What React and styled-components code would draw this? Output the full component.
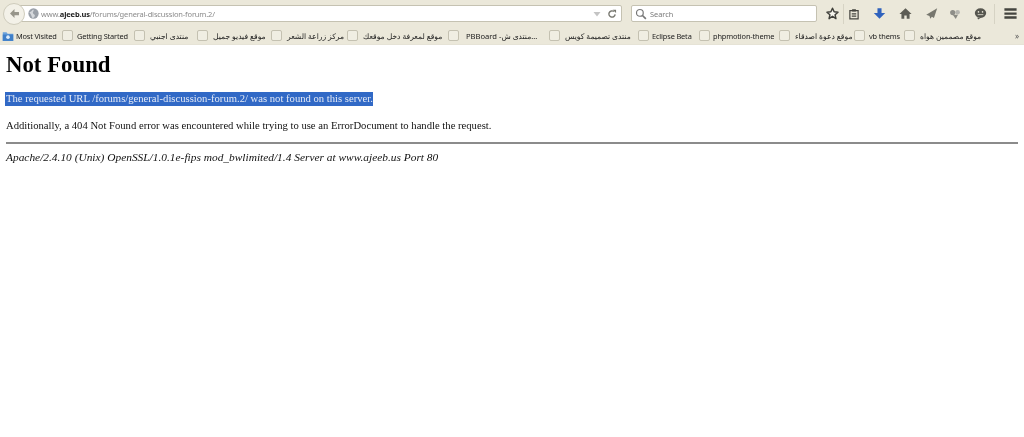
import React from "react";
import styled, { createGlobalStyle } from "styled-components";

const Global = createGlobalStyle`
  html, body { margin: 0; padding: 0; background: #fff; }
  #root { min-height: 100vh; }
`;

const Page = styled.div`
  width: 1024px;
  height: 437px;
  overflow: hidden;
  background: #fff;
  filter: blur(0.4px);
`;

const Chrome = styled.header`
  background: #ebe8da;
  border-bottom: 1px solid #e6e3d6;
  font-family: "Noto Sans", "DejaVu Sans", "Liberation Sans", sans-serif;
`;

const NavBar = styled.div`
  display: flex;
  align-items: center;
  height: 27px;
  padding: 0 0 0 3px;
  box-sizing: border-box;
`;

const BackButton = styled.div`
  flex: none;
  width: 22px;
  height: 22px;
  border-radius: 50%;
  background: #f3f1e8;
  border: 1px solid #cfccbc;
  box-sizing: border-box;
  display: flex;
  align-items: center;
  justify-content: center;
  margin-right: -8px;
  position: relative;
  z-index: 1;
`;

const Field = styled.div`
  height: 17px;
  background: #fff;
  border: 1px solid #c5c2b2;
  border-radius: 2px;
  box-sizing: border-box;
  display: flex;
  align-items: center;
  flex: none;
  width: ${(p) => p.$w}px;
  margin-left: ${(p) => p.$ml || 0}px;
  padding-left: ${(p) => p.$pl || 0}px;
`;

const UrlText = styled.span`
  font-size: 7.5px;
  letter-spacing: -0.15px;
  color: #8a8a8a;
  margin-left: 2px;
  white-space: nowrap;
  b { color: #222; font-weight: 700; }
`;

const FieldEnd = styled.div`
  margin-left: auto;
  display: flex;
  align-items: center;
  gap: 6px;
  padding-right: 4px;
`;

const SearchText = styled.span`
  font-size: 7.4px;
  color: #7a7a7a;
  margin-left: 3px;
`;

const ToolIcon = styled.div`
  flex: none;
  width: ${(p) => p.$w || 16}px;
  height: 16px;
  display: flex;
  align-items: center;
  justify-content: center;
  margin-left: ${(p) => p.$ml || 0}px;
`;

const Divider = styled.div`
  flex: none;
  width: 1px;
  height: 20px;
  background: #d6d3c4;
  margin-left: ${(p) => p.$ml || 0}px;
`;

const BookmarkBar = styled.div`
  display: flex;
  align-items: center;
  height: 17px;
  padding-left: 2px;
`;

const Bookmark = styled.div`
  flex: none;
  display: flex;
  align-items: center;
  width: ${(p) => p.$w}px;
  font-size: ${(p) => (p.$arabic ? 7.6 : 7.4)}px;
  letter-spacing: ${(p) => (p.$arabic ? 0 : -0.15)}px;
  color: #1c1c1c;
  white-space: nowrap;
`;

const FolderLabel = styled.span`
  margin-left: 2px;
`;

const Square = styled.span`
  flex: none;
  width: 11px;
  height: 11px;
  border: 1px solid #c4c1b1;
  border-radius: 2px;
  box-sizing: border-box;
  background: #f0eee3;
  margin-right: ${(p) => p.$gap || 4}px;
`;

const Chevron = styled.span`
  margin-left: auto;
  margin-right: 5px;
  font-size: 8px;
  color: #555;
`;

const Content = styled.main`
  padding: 0 6px;
  font-family: "Liberation Serif", "Times New Roman", serif;
  font-size: 10.65px;
  line-height: 13px;
  color: #111;
`;

const Title = styled.h1`
  margin: 7px 0 0;
  font-size: 22.8px;
  line-height: 26px;
  font-weight: 700;
  color: #000;
`;

const Para = styled.p`
  margin: ${(p) => p.$mt}px 0 0;
`;

const Selected = styled.span`
  background: #3169c6;
  color: #e4eaf6;
  display: inline-block;
  line-height: 14px;
  margin-left: -1px;
  padding-left: 1px;
`;

const Rule = styled.hr`
  margin: 10px 0 0;
  height: 2px;
  border: 0;
  background: #8b8b8b;
`;

const Address = styled.address`
  margin-top: 7px;
  font-style: italic;
  font-size: 11.4px;
`;

const Icon = ({ children, w = 14, h = 14, vb = "0 0 16 16" }) => (
  <svg width={w} height={h} viewBox={vb}>{children}</svg>
);

const bookmarks = [
  { w: 72, t: "Getting Started" },
  { w: 63, t: "منتدى اجنبي", gap: 5, ar: true },
  { w: 74, t: "موقع فيديو جميل", gap: 5, ar: true },
  { w: 76, t: "مركز زراعة الشعر", gap: 5, ar: true },
  { w: 101, t: "موقع لمعرفة دخل موقعك", gap: 5, ar: true },
  { w: 101, t: "PBBoard -منتدى ش...", gap: 7, ar: true },
  { w: 89, t: "منتدى تصميمة كويس", gap: 5, ar: true },
  { w: 61, t: "Eclipse Beta", gap: 3 },
  { w: 80, t: "phpmotion-theme", gap: 3 },
  { w: 75, t: "موقع دعوة اصدقاء", gap: 5, ar: true },
  { w: 50, t: "vb thems", gap: 4 },
  { w: 90, t: "موقع مصممين هواه", gap: 5, ar: true },
];

export default function App() {
  return (
    <Page>
      <Global />
      <Chrome>
        <NavBar>
          <BackButton>
            <Icon w={13} h={13}>
              <path d="M8 2.5 2.5 8 8 13.5V10h5.5V6H8z" fill="#97958a" />
            </Icon>
          </BackButton>
          <Field $w={605} $pl={10}>
            <Icon w={11} h={11}>
              <circle cx="8" cy="8" r="7.5" fill="#9aa0a8" />
              <path d="M2 6c3-1 4-3 6-4 1 2-1 3-1 5s3 2 3 4-2 3-3 4C5 13 5 9 2 6z" fill="#d5d8dc" />
            </Icon>
            <UrlText>www.<b>ajeeb.us</b>/forums/general-discussion-forum.2/</UrlText>
            <FieldEnd>
              <Icon w={8} h={8}><path d="M1 4h14L8 13z" fill="#c4c4c4" /></Icon>
              <Icon w={10} h={10}>
                <path d="M13 8.500A5 5 0 1 1 11 4" fill="none" stroke="#77776f" strokeWidth="2.200" />
                <path d="M9 1l5.500 0v5.500z" fill="#77776f" />
              </Icon>
            </FieldEnd>
          </Field>
          <Field $w={186} $ml={9} $pl={3}>
            <Icon w={12} h={12}>
              <circle cx="6.500" cy="6.500" r="4.500" fill="none" stroke="#777" strokeWidth="1.600" />
              <path d="M10 10l4.500 4.500" stroke="#777" strokeWidth="2.200" />
            </Icon>
            <SearchText>Search</SearchText>
          </Field>
          <ToolIcon $ml={7}>
            <Icon w={13} h={13}>
              <path d="M8 1.500l2 4.400 4.800.5-3.600 3.200 1 4.700L8 11.400l-4.200 2.900 1-4.700L1.200 6.400 6 5.900z" fill="#f7f6ef" stroke="#3f3f3a" strokeWidth="1.800" strokeLinejoin="round" />
            </Icon>
          </ToolIcon>
          <Divider $ml={3} />
          <ToolIcon $ml={1} $w={18}>
            <Icon w={12} h={12}>
              <path d="M2.500 3.500h11v11h-11z" fill="none" stroke="#44443f" strokeWidth="1.600" />
              <path d="M5.500 1.500h5v3h-5zM5 7h6v1.500H5zM5 10h6v1.500H5z" fill="#44443f" />
            </Icon>
          </ToolIcon>
          <ToolIcon $ml={7} $w={18}>
            <Icon w={13} h={13}>
              <path d="M5.500 1.500h5v6H15L8 14.500 1 7.500h4.500z" fill="#2f62bd" />
            </Icon>
          </ToolIcon>
          <ToolIcon $ml={8} $w={18}>
            <Icon w={13} h={13}>
              <path d="M8 1.500 15.500 8.500H13v6H9.500v-4h-3v4H3v-6H.5z" fill="#5d5d55" />
            </Icon>
          </ToolIcon>
          <ToolIcon $ml={8} $w={18}>
            <Icon w={13} h={13}>
              <path d="M15 1.500 1.500 9.500l4 1.500 1 3.500 2-2.500 2.500 1.500z" fill="#77776e" />
            </Icon>
          </ToolIcon>
          <ToolIcon $ml={6} $w={18}>
            <Icon w={12} h={12}>
              <circle cx="5" cy="6" r="3.500" fill="#8e8e88" />
              <circle cx="11.500" cy="5.500" r="3" fill="#b5b5af" />
              <path d="M5 9h7l-3 5.500z" fill="#8a8a83" />
            </Icon>
          </ToolIcon>
          <ToolIcon $ml={7} $w={18}>
            <Icon w={13} h={13}>
              <ellipse cx="8" cy="7.500" rx="7" ry="6" fill="#55554e" />
              <path d="M4 13l1 2.500 3-2z" fill="#55554e" />
              <circle cx="5.500" cy="6" r="1" fill="#ebe8da" />
              <circle cx="10.500" cy="6" r="1" fill="#ebe8da" />
              <path d="M4.500 9h7v1h-7z" fill="#ebe8da" />
            </Icon>
          </ToolIcon>
          <Divider $ml={5} />
          <ToolIcon $ml={6} $w={18}>
            <Icon w={15} h={15}>
              <path d="M1.500 2.500h13v2.500h-13zM1.500 6.800h13v2.500h-13zM1.500 11h13v2.500h-13z" fill="#44443f" />
            </Icon>
          </ToolIcon>
        </NavBar>
        <BookmarkBar>
          <Bookmark $w={60}>
            <Icon w={12} h={12}>
              <path d="M1 3h5l1.500 2H15v9.500H1z" fill="#6ba2dc" />
              <path d="M1 6h14v8.500H1z" fill="#3f7fc8" />
              <circle cx="8" cy="9.500" r="2.400" fill="#dcecfb" />
            </Icon>
            <FolderLabel>Most Visited</FolderLabel>
          </Bookmark>
          {bookmarks.map((b) => (
            <Bookmark key={b.t} $w={b.w} $arabic={b.ar}>
              <Square $gap={b.gap} />
              <span dir="ltr">{b.t}</span>
            </Bookmark>
          ))}
          <Chevron>»</Chevron>
        </BookmarkBar>
      </Chrome>
      <Content>
        <Title>Not Found</Title>
        <Para $mt={14}>
          <Selected>The requested URL /forums/general-discussion-forum.2/ was not found on this server.</Selected>
        </Para>
        <Para $mt={13}>Additionally, a 404 Not Found error was encountered while trying to use an ErrorDocument to handle the request.</Para>
        <Rule />
        <Address>Apache/2.4.10 (Unix) OpenSSL/1.0.1e-fips mod_bwlimited/1.4 Server at www.ajeeb.us Port 80</Address>
      </Content>
    </Page>
  );
}
